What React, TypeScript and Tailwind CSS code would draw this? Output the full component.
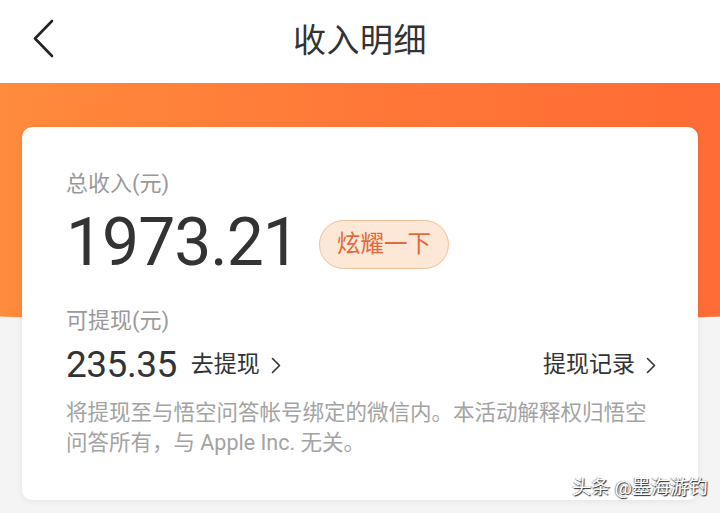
import React from "react";

function Chevron({ className }: { className?: string }) {
  return (
    <svg className={className} width="10" height="17" viewBox="0 0 10 17" fill="none">
      <path d="M1.5 1.5 L8.5 8.5 L1.5 15.5" stroke="#333" strokeWidth="1.6" strokeLinecap="round" strokeLinejoin="round" />
    </svg>
  );
}

export default function App() {
  return (
    <div
      className="relative w-[720px] h-[513px] overflow-hidden bg-[#f4f4f4]"
      style={{ fontFamily: "Roboto, 'Noto Sans CJK SC', 'Noto Sans', sans-serif" }}
    >
      <header className="relative z-10 h-[83px] bg-white flex items-center justify-center">
        <svg className="absolute left-[30px] top-[18px]" width="28" height="42" viewBox="0 0 28 42" fill="none">
          <path d="M22 3 L5 20.5 L22 38" stroke="#222" strokeWidth="2.6" strokeLinecap="round" strokeLinejoin="round" />
        </svg>
        <h1 className="text-[33px] leading-none text-[#333] tracking-[0.5px] -mt-[3px]">收入明细</h1>
      </header>

      <div className="relative pt-[44px]">
        <div className="absolute top-0 left-[-30%] w-[160%] h-[240px] rounded-b-[50%_30px] bg-[linear-gradient(to_right,#ff9c40_0%,#ff8a3c_20%,#ff7838_50%,#ff6433_100%)]" />
        <div className="relative mx-[22px] rounded-[10px] bg-white px-[44px] pt-[42px] pb-[42px] shadow-[0_2px_6px_rgba(0,0,0,0.06)]">
          <div className="text-[22px] leading-[30px] text-[#999]">总收入(元)</div>
          <div className="mt-[11px] h-[66px] flex items-center">
            <span className="text-[66px] leading-none text-[#333] tracking-[-1px]">1973.21</span>
            <span className="ml-[20px] mt-[3px] h-[49px] px-[17px] flex items-center rounded-full border border-[#f0bf97] bg-[#fde8d7] text-[23.5px] text-[#e26a3c]">
              炫耀一下
            </span>
          </div>
          <div className="mt-[30px] text-[22px] leading-[30px] text-[#999]">可提现(元)</div>
          <div className="mt-[8px] h-[40px] flex items-center justify-between">
            <div className="flex items-center">
              <span className="text-[37px] leading-none text-[#333] tracking-[-0.5px]">235.35</span>
              <span className="ml-[14px] text-[23px] text-[#333] mt-[2px]">去提现</span>
              <Chevron className="ml-[11px] mt-[2px]" />
            </div>
            <div className="flex items-center mr-[-2px]">
              <span className="text-[23px] text-[#333] mt-[2px]">提现记录</span>
              <Chevron className="ml-[11px] mt-[2px]" />
            </div>
          </div>
          <p className="mt-[14px] text-[21.5px] leading-[30px] text-[#a3a3a3]">
            将提现至与悟空问答帐号绑定的微信内。本活动解释权归悟空问答所有，与 Apple Inc. 无关。
          </p>
        </div>
      </div>

      <div
        className="absolute left-[572px] top-[476px] text-[19px] leading-[24px] text-white whitespace-nowrap"
        style={{ textShadow: "1px 1px 1px rgba(0,0,0,0.85), -1px 0 1px rgba(0,0,0,0.4)" }}
      >
        头条 @墨海游钓
      </div>
    </div>
  );
}
